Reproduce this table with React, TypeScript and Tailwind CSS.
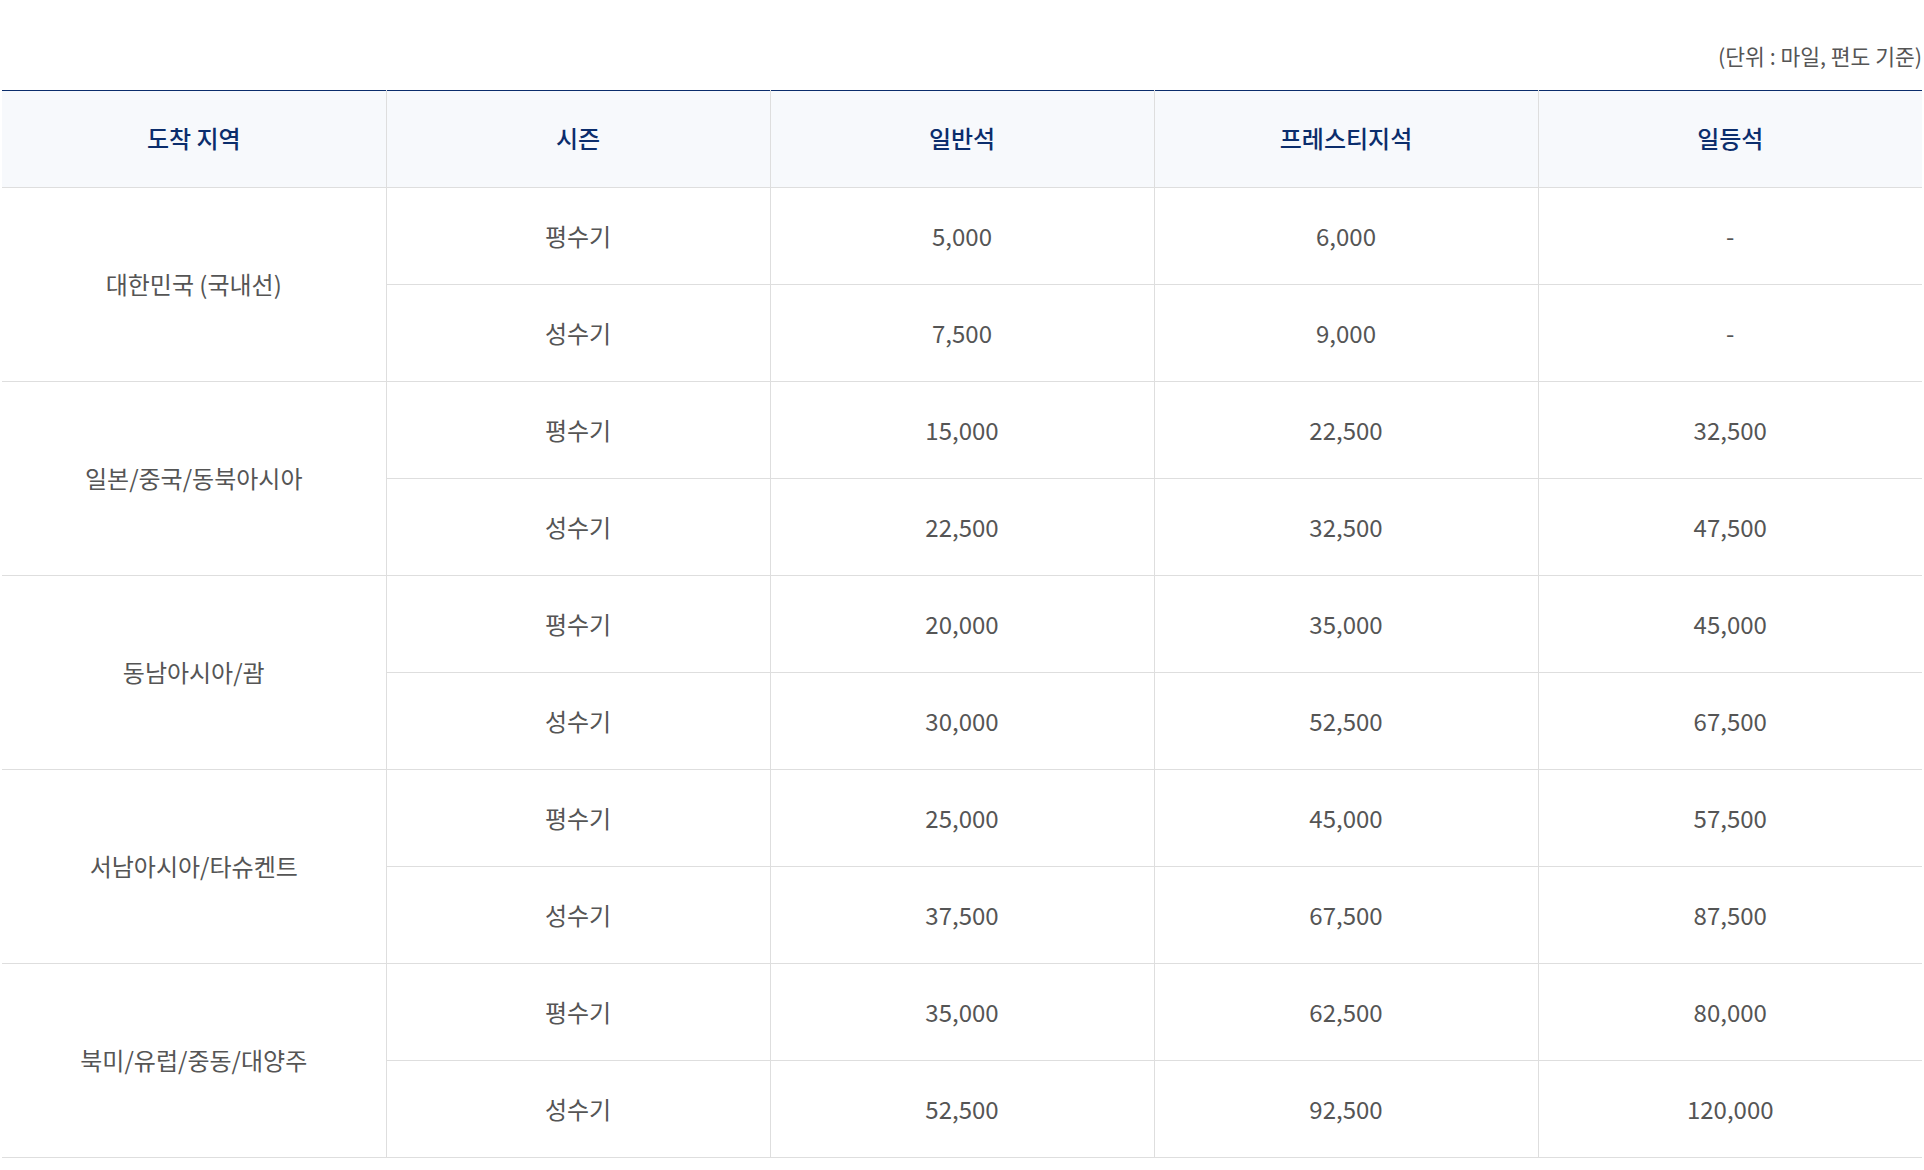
import React from "react";

const rows = [
  { region: "대한민국 (국내선)", data: [["평수기", "5,000", "6,000", "-"], ["성수기", "7,500", "9,000", "-"]] },
  { region: "일본/중국/동북아시아", data: [["평수기", "15,000", "22,500", "32,500"], ["성수기", "22,500", "32,500", "47,500"]] },
  { region: "동남아시아/괌", data: [["평수기", "20,000", "35,000", "45,000"], ["성수기", "30,000", "52,500", "67,500"]] },
  { region: "서남아시아/타슈켄트", data: [["평수기", "25,000", "45,000", "57,500"], ["성수기", "37,500", "67,500", "87,500"]] },
  { region: "북미/유럽/중동/대양주", data: [["평수기", "35,000", "62,500", "80,000"], ["성수기", "52,500", "92,500", "120,000"]] },
];

const headers = ["도착 지역", "시즌", "일반석", "프레스티지석", "일등석"];

export default function App() {
  return (
    <div
      className="w-[1924px] min-h-[1170px] bg-white pl-[2px] pr-[2px]"
      style={{ fontFamily: '"Noto Sans CJK KR", "Noto Sans", sans-serif' }}
    >
      <div className="pt-[40px] h-[90px] text-right text-[21.5px] leading-[32px] text-[#555555]">
        (단위 : 마일, 편도 기준)
      </div>
      <table className="w-[1920px] table-fixed border-collapse border-t border-t-[#0b2d6c]">
        <colgroup>
          <col className="w-[384px]" />
          <col className="w-[384px]" />
          <col className="w-[384px]" />
          <col className="w-[384px]" />
          <col className="w-[384px]" />
        </colgroup>
        <thead>
          <tr className="bg-[#f7f9fc]">
            {headers.map((h, i) => (
              <th
                key={h}
                className={`h-[97px] p-0 pb-[2px] text-center align-middle text-[24px] font-medium text-[#0b2d6c] border-b border-b-[#dedede] ${i < 4 ? "border-r border-r-[#dedede]" : ""}`}
              >
                {h}
              </th>
            ))}
          </tr>
        </thead>
        <tbody>
          {rows.map((r) =>
            r.data.map((d, j) => (
              <tr key={r.region + j}>
                {j === 0 && (
                  <td
                    rowSpan={2}
                    className="p-0 pb-[1px] text-center align-middle text-[24px] text-[#555555] border-b border-b-[#dedede] border-r border-r-[#dedede]"
                  >
                    {r.region}
                  </td>
                )}
                {d.map((c, k) => (
                  <td
                    key={k}
                    className={`h-[97px] p-0 pb-[1px] text-center align-middle text-[24px] text-[#555555] border-b border-b-[#dedede] ${k < 3 ? "border-r border-r-[#dedede]" : ""}`}
                  >
                    {c}
                  </td>
                ))}
              </tr>
            ))
          )}
        </tbody>
      </table>
    </div>
  );
}
